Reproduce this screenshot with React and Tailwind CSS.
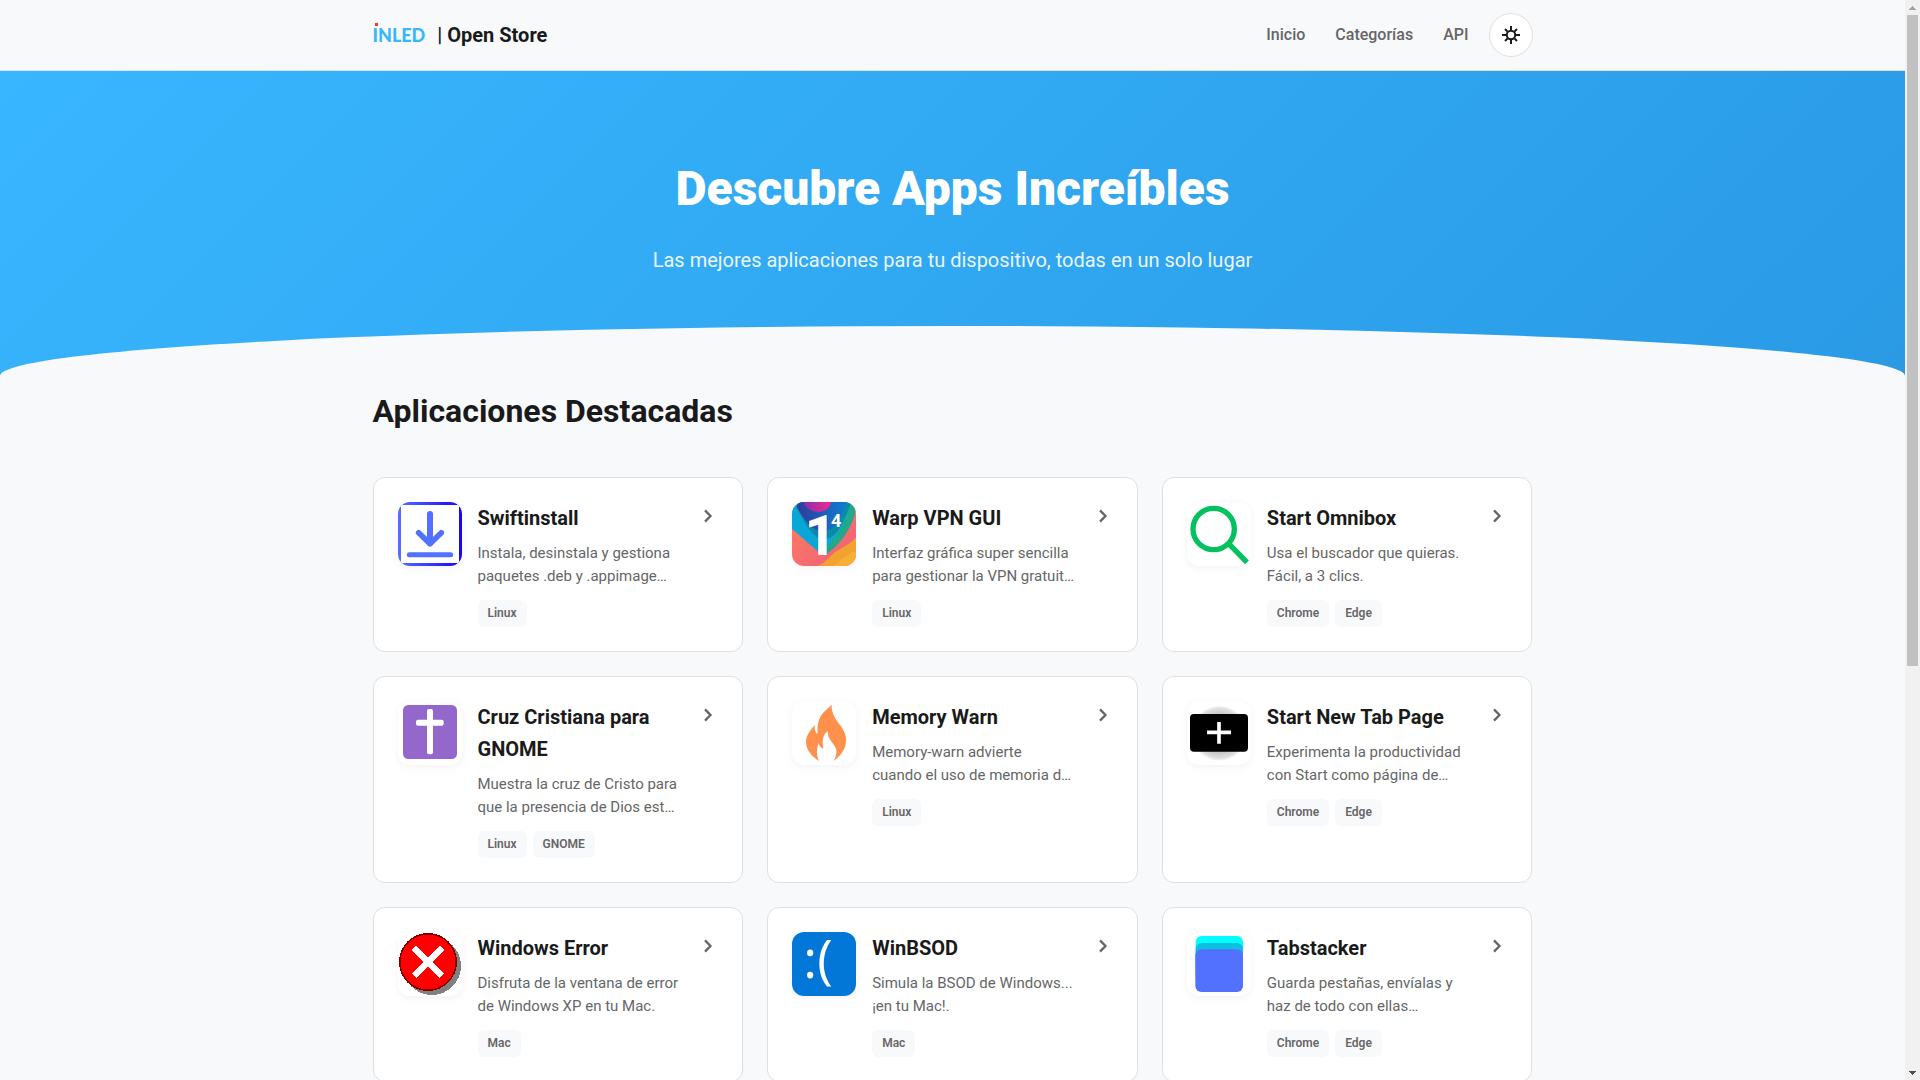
import React, { useState } from 'react';

const SwiftinstallIcon = () => (
    <svg viewBox="0 0 192 192" className="h-16 w-16" aria-hidden="true">
        <defs>
            <linearGradient id="swift-border" x1="0" y1="0" x2="1" y2="0">
                <stop offset="0" stopColor="#5271ff" />
                <stop offset="1" stopColor="#1a00ff" />
            </linearGradient>
        </defs>
        <rect width="192" height="192" fill="url(#swift-border)" />
        <rect x="9" y="9" width="174" height="174" rx="4" fill="#fff" />
        <g stroke="#5271ff" fill="none" strokeLinecap="round" strokeLinejoin="round">
            <path d="M96 36V124" strokeWidth="18" />
            <path d="M62 92L96 125L130 92" strokeWidth="17" />
            <path d="M34 158H158" strokeWidth="15" />
        </g>
    </svg>
);

const WarpIcon = () => (
    <svg viewBox="0 0 192 192" className="h-16 w-16" aria-hidden="true">
        <defs>
            <linearGradient id="warp-pink" x1="0" y1="0" x2="1" y2="0">
                <stop offset="0" stopColor="#8a2fa8" />
                <stop offset="1" stopColor="#ee2a90" />
            </linearGradient>
            <linearGradient id="warp-blue" x1="0" y1="0" x2="1" y2="0">
                <stop offset="0" stopColor="#303a9c" />
                <stop offset="1" stopColor="#0d7fd0" />
            </linearGradient>
            <linearGradient id="warp-coral" x1="0" y1="0" x2="1" y2="1">
                <stop offset="0" stopColor="#ff7e5c" />
                <stop offset="1" stopColor="#ef5f7c" />
            </linearGradient>
        </defs>
        <rect width="192" height="192" fill="url(#warp-coral)" />
        <path d="M0 0H176C172 60 150 110 96 160C70 145 30 105 0 82Z" fill="#0ba6d8" />
        <path d="M176 0H192V20C184 70 150 126 98 160L84 150C136 112 160 60 176 0Z" fill="#22a98b" />
        <path d="M14 18C40 66 62 110 96 112C136 110 154 60 178 0H14Z" fill="#0b8aa8" />
        <path d="M14 14C34 50 58 86 92 90C128 86 152 40 166 0H20Z" fill="url(#warp-blue)" />
        <path d="M34 0C42 20 60 30 82 30C102 28 114 16 118 0Z" fill="url(#warp-pink)" />
        <path d="M76 192C104 182 112 160 136 146C158 132 178 124 192 106V192Z" fill="#f3a12f" />
        <path d="M124 192C146 180 160 156 192 148V192Z" fill="#f7af36" />
        <text x="38" y="158" fontSize="164" fontWeight="800" fontFamily="Roboto, sans-serif" fill="#fff">1</text>
        <text x="117" y="75" fontSize="54" fontWeight="700" fontFamily="Roboto, sans-serif" fill="#fff">4</text>
    </svg>
);

const OmniboxIcon = () => (
    <svg viewBox="0 0 192 192" className="h-16 w-16" aria-hidden="true">
        <g stroke="#04c15f" fill="none">
            <circle cx="80" cy="81" r="62" strokeWidth="16" />
            <path d="M122 122L180 181" strokeWidth="16" />
        </g>
    </svg>
);

const CruzIcon = () => (
    <svg viewBox="0 0 192 192" className="h-16 w-16" aria-hidden="true">
        <rect x="15" y="12" width="162" height="162" rx="16" fill="#9467cd" />
        <rect x="87" y="24" width="18" height="136" rx="6" fill="#fff" />
        <rect x="54" y="56" width="83" height="18" rx="6" fill="#fff" />
    </svg>
);

const MemoryIcon = () => (
    <svg viewBox="81 93 192 192" className="h-16 w-16" aria-hidden="true">
        <path
            d="M200 104C198 130 213 149 228 169C241 187 248 208 240 230C233 250 219 263 205 273C216 256 218 240 207 225C198 212 188 203 188 183C178 191 173 203 173 216L175 237C167 232 162 227 161 220C153 240 155 258 162 273C144 262 126 245 123 220C122 199 134 183 149 165C148 176 150 186 158 193C156 170 159 150 170 134C178 122 190 115 200 104Z"
            fill="#ff914d"
        />
    </svg>
);

const NewTabIcon = () => (
    <svg viewBox="0 0 192 192" className="h-16 w-16" aria-hidden="true">
        <defs>
            <radialGradient id="tab-glow">
                <stop offset="0.6" stopColor="#bdbdbd" />
                <stop offset="0.9" stopColor="#dedede" />
                <stop offset="1" stopColor="#f6f6f6" />
            </radialGradient>
        </defs>
        <circle cx="97" cy="97" r="82" fill="url(#tab-glow)" />
        <rect x="9" y="39" width="174" height="113" rx="12" fill="#000" />
        <path d="M96 63V128M60 94H132" stroke="#fff" strokeWidth="11" />
    </svg>
);

const WindowsErrorIcon = () => (
    <svg viewBox="0 0 64 64" className="h-16 w-16" shapeRendering="crispEdges" aria-hidden="true">
        <circle cx="34" cy="34" r="29" fill="#808080" />
        <circle cx="30" cy="30" r="29" fill="#800000" />
        <circle cx="30" cy="30" r="27.5" fill="#ff0000" />
        <path d="M16 16L44 44M44 16L16 44" stroke="#fff" strokeWidth="7" />
    </svg>
);

const WinBsodIcon = () => (
    <svg viewBox="0 0 192 192" className="h-16 w-16" aria-hidden="true">
        <rect width="192" height="192" fill="#0277d7" />
        <text x="34" y="138" fontSize="158" fontFamily="'Open Sans', sans-serif" fill="#fff">:(</text>
    </svg>
);

const TabstackerIcon = () => (
    <svg viewBox="0 0 192 192" className="h-16 w-16" aria-hidden="true">
        <rect x="26" y="12" width="142" height="120" rx="18" fill="#00ffff" />
        <rect x="26" y="33" width="142" height="120" rx="18" fill="#0cc0df" />
        <rect x="25" y="52" width="143" height="128" rx="18" fill="#5271ff" />
    </svg>
);

const apps = [
    { name: 'Swiftinstall', description: 'Instala, desinstala y gestiona\npaquetes .deb y .appimage…', platforms: ['Linux'], Icon: SwiftinstallIcon },
    { name: 'Warp VPN GUI', description: 'Interfaz gráfica super sencilla\npara gestionar la VPN gratuit…', platforms: ['Linux'], Icon: WarpIcon },
    { name: 'Start Omnibox', description: 'Usa el buscador que quieras.\nFácil, a 3 clics.', platforms: ['Chrome', 'Edge'], Icon: OmniboxIcon },
    { name: 'Cruz Cristiana para GNOME', description: 'Muestra la cruz de Cristo para\nque la presencia de Dios est…', platforms: ['Linux', 'GNOME'], Icon: CruzIcon },
    { name: 'Memory Warn', description: 'Memory-warn advierte\ncuando el uso de memoria d…', platforms: ['Linux'], Icon: MemoryIcon },
    { name: 'Start New Tab Page', description: 'Experimenta la productividad\ncon Start como página de…', platforms: ['Chrome', 'Edge'], Icon: NewTabIcon },
    { name: 'Windows Error', description: 'Disfruta de la ventana de error\nde Windows XP en tu Mac.', platforms: ['Mac'], Icon: WindowsErrorIcon },
    { name: 'WinBSOD', description: 'Simula la BSOD de Windows...\n¡en tu Mac!.', platforms: ['Mac'], Icon: WinBsodIcon },
    { name: 'Tabstacker', description: 'Guarda pestañas, envíalas y\nhaz de todo con ellas…', platforms: ['Chrome', 'Edge'], Icon: TabstackerIcon },
];

const AppCard = ({ app }) => {
    const { name, description, platforms, Icon } = app;

    return (
        <a href="#" className="flex items-start rounded-xl border border-[#e0e0e0] bg-white p-6">
            <div className="mr-4 h-16 w-16 shrink-0 overflow-hidden rounded-xl bg-white shadow-[0_2px_8px_rgba(0,0,0,0.05)]">
                <Icon />
            </div>
            <div className="min-w-0 flex-1">
                <h3 className="mb-2 text-xl leading-8 font-bold text-[#1a1a1a]">{name}</h3>
                <p className="mb-3 text-[15px] leading-[23px] whitespace-pre-line text-[#666]">{description}</p>
                <div className="flex flex-wrap gap-1.5">
                    {platforms.map((platform) => (
                        <span key={platform} className="rounded-md bg-[#f8f9fb] px-2.5 py-1 text-xs leading-[19px] font-semibold text-[#666]">
                            {platform}
                        </span>
                    ))}
                </div>
            </div>
            <span className="ml-3 flex h-7 items-center">
                <svg viewBox="0 0 22 22" className="h-[22px] w-[22px]" fill="none" stroke="#666" strokeWidth="2.3" aria-hidden="true">
                    <path d="M9 5.4L14.5 11L9 16.6" />
                </svg>
            </span>
        </a>
    );
};

const Header = () => {
    const [dark, setDark] = useState(false);

    return (
        <header className="border-b border-[#e0e0e0]">
            <div className="mx-auto flex h-[70px] max-w-[1200px] items-center justify-between px-5">
                <a href="#" className="flex items-center gap-3 text-[#1a1a1a]">
                    <span className="relative font-['Lato',sans-serif] text-lg leading-8 font-black text-[#38b6ff]">
                        INLED
                        <span className="absolute top-1 left-0.5 h-[3px] w-[3px] bg-[#ff3131]" />
                    </span>
                    <span className="text-xl leading-8 font-bold">
                        <span className="font-medium">|</span> Open Store
                    </span>
                </a>
                <div className="flex items-center gap-5">
                    <nav className="flex items-center gap-[30px] font-medium text-[#666]">
                        <a href="#">Inicio</a>
                        <a href="#">Categorías</a>
                        <a href="#">API</a>
                    </nav>
                    <button
                        type="button"
                        aria-label="Cambiar tema"
                        aria-pressed={dark}
                        onClick={() => setDark(!dark)}
                        className="flex h-11 w-11 items-center justify-center rounded-full border border-[#e0e0e0] bg-white"
                    >
                        <svg viewBox="0 0 18 18" className="h-[18px] w-[18px]" fill="none" stroke="#1a1a1a" strokeWidth="2" aria-hidden="true">
                            <circle cx="9" cy="9" r="4.2" />
                            <path d="M9 0V4M9 14V18M0 9H4M14 9H18M3 3L5.6 5.6M12.4 12.4L15 15M3 15L5.6 12.4M12.4 5.6L15 3" />
                        </svg>
                    </button>
                </div>
            </div>
        </header>
    );
};

const Scrollbar = () => (
    <div className="flex w-[15px] shrink-0 flex-col bg-[#f1f1f1]" aria-hidden="true">
        <div className="flex h-[15px] items-center justify-center">
            <svg viewBox="0 0 7 4" className="h-1 w-[7px]" fill="#a3a3a3" shapeRendering="crispEdges">
                <path d="M0 4H7V3H6V2H5V1H4V0H3V1H2V2H1V3H0Z" />
            </svg>
        </div>
        <div className="flex-1 px-0.5">
            <div className="h-[62%] bg-[#c1c1c1]" />
        </div>
        <div className="flex h-[15px] items-center justify-center">
            <svg viewBox="0 0 7 4" className="h-1 w-[7px]" fill="#505050" shapeRendering="crispEdges">
                <path d="M0 0H7V1H6V2H5V3H4V4H3V3H2V2H1V1H0Z" />
            </svg>
        </div>
    </div>
);

const App = () => (
    <div className="flex h-screen overflow-hidden bg-[#f8f9fb] font-['Roboto',sans-serif]">
        <div className="min-w-0 flex-1 overflow-hidden">
            <Header />
            <main>
                <section className="relative bg-linear-135 from-[#38b6ff] to-[#2a9ae5] px-5 pt-20 pb-[100px] text-center text-white">
                    <h1 className="mb-[18px] text-5xl leading-[75px] font-black">Descubre Apps Increíbles</h1>
                    <p className="text-xl leading-8 opacity-90">Las mejores aplicaciones para tu dispositivo, todas en un solo lugar</p>
                    <div className="absolute inset-x-0 bottom-0 h-[50px] rounded-t-[50%_100%] bg-[#f8f9fb]" />
                </section>

                <section className="mx-auto max-w-[1200px] px-5 pt-2.5 pb-20">
                    <h2 className="mb-10 text-[32px] leading-[51px] font-bold text-[#1a1a1a]">Aplicaciones Destacadas</h2>
                    <div className="grid grid-cols-1 gap-6 md:grid-cols-2 lg:grid-cols-3">
                        {apps.map((app) => (
                            <AppCard key={app.name} app={app} />
                        ))}
                    </div>
                </section>
            </main>
        </div>
        <Scrollbar />
    </div>
);

export default App;
